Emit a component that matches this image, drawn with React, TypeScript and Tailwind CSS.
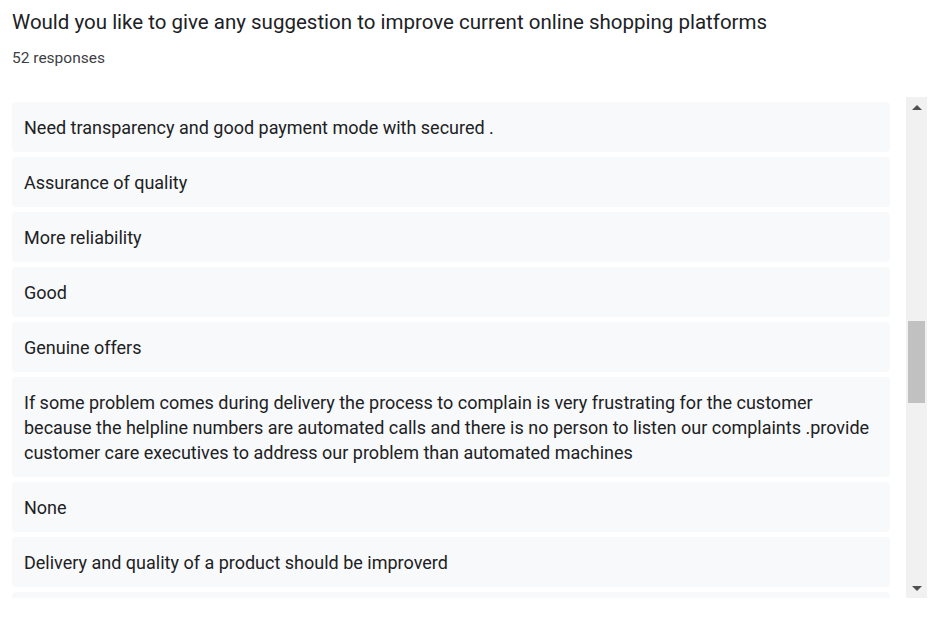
import React from 'react';

const responses: string[] = [
  'Need transparency and good payment mode with secured .',
  'Assurance of quality',
  'More reliability',
  'Good',
  'Genuine offers',
  'If some problem comes during delivery the process to complain is very frustrating for the customer because the helpline numbers are automated calls and there is no person to listen our complaints .provide customer care executives to address our problem than automated machines',
  'None',
  'Delivery and quality of a product should be improverd',
];

const App: React.FC = () => {
  return (
    <div className="w-[937px] h-[622px] bg-white overflow-hidden font-['Roboto',sans-serif] text-[#202124]">
      {/* Header */}
      <div className="pl-3 pt-[9px]">
        <h1 className="text-[20.5px] leading-[26px] font-normal">
          Would you like to give any suggestion to improve current online shopping platforms
        </h1>
        <p className="mt-[13px] text-[15.5px] leading-5 text-[#3c4043]">52 responses</p>
      </div>

      {/* Responses */}
      <div className="mt-[29px] flex pl-3 h-[501px]">
        <div className="w-[878px] overflow-hidden pt-[5px] flex flex-col gap-[5px]">
          {responses.map((r, i) => (
            <div
              key={i}
              className="shrink-0 bg-[#f8f9fa] rounded px-3 pt-[13px] pb-[12px] text-[18px] leading-[25px]"
            >
              {r}
            </div>
          ))}
          {/* next response, scrolled out of view */}
          <div className="shrink-0 h-[50px] bg-[#f8f9fa] rounded" />
        </div>

        {/* Scrollbar */}
        <div className="ml-[16px] w-[21px] bg-[#f1f1f1] flex flex-col items-center">
          <div className="h-[20px] flex items-center justify-center">
            <div className="w-0 h-0 border-l-[5px] border-r-[5px] border-b-[5px] border-l-transparent border-r-transparent border-b-[#505050]" />
          </div>
          <div className="mt-[204px] w-[17px] h-[82px] bg-[#c1c1c1]" />
          <div className="flex-1" />
          <div className="h-[20px] flex items-center justify-center">
            <div className="w-0 h-0 border-l-[5px] border-r-[5px] border-t-[5px] border-l-transparent border-r-transparent border-t-[#505050]" />
          </div>
        </div>
      </div>
    </div>
  );
};

export default App;
